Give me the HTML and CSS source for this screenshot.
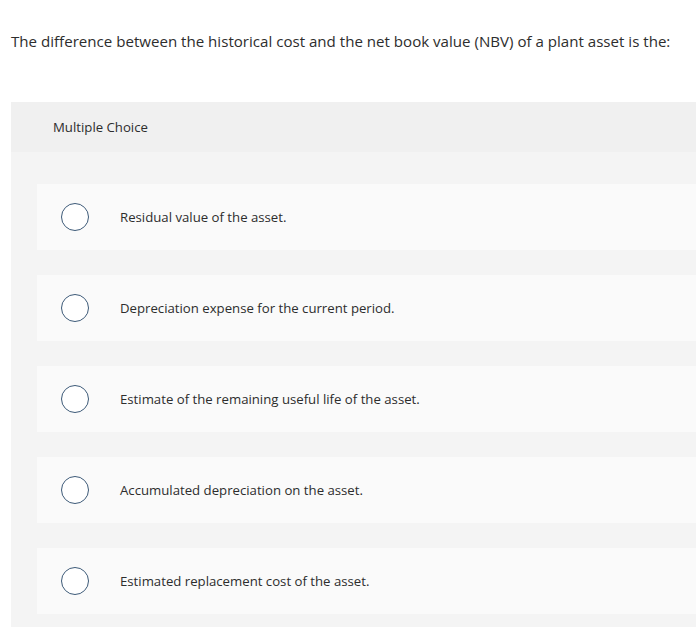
FILE: index.html
```html
<!DOCTYPE html>
<html lang="en">
<head>
<meta charset="utf-8">
<title>Multiple Choice</title>
<link rel="stylesheet" href="styles.css">
</head>
<body>
<p class="question">The difference between the historical cost and the net book value (NBV) of a plant asset is the:</p>
<section class="panel">
  <div class="panel-header">Multiple Choice</div>
  <div class="options">
    <label class="option"><span class="radio"></span><span class="option-text">Residual value of the asset.</span></label>
    <label class="option"><span class="radio"></span><span class="option-text">Depreciation expense for the current period.</span></label>
    <label class="option"><span class="radio"></span><span class="option-text">Estimate of the remaining useful life of the asset.</span></label>
    <label class="option"><span class="radio"></span><span class="option-text">Accumulated depreciation on the asset.</span></label>
    <label class="option"><span class="radio"></span><span class="option-text">Estimated replacement cost of the asset.</span></label>
  </div>
</section>
</body>
</html>
```

FILE: styles.css
```css
html, body {
  margin: 0;
  padding: 0;
  background: #ffffff;
}
body {
  font-family: "Open Sans", "Lato", sans-serif;
  color: #333333;
  overflow: hidden;
}
.question {
  margin: 0;
  padding: 30px 0 0 11px;
  font-size: 15.1px;
  line-height: 22px;
  color: #2d2d2d;
  white-space: nowrap;
}
.panel {
  margin: 50px 0 0 11px;
  background: #f4f4f4;
  padding-bottom: 13px;
}
.panel-header {
  height: 50px;
  line-height: 50px;
  background: #f0f0f0;
  padding-left: 42px;
  font-size: 13.2px;
  color: #2d2d2d;
}
.options {
  display: flex;
  flex-direction: column;
  gap: 25px;
  padding: 32px 0 0 26px;
}
.option {
  display: flex;
  align-items: center;
  height: 66px;
  background: #fafafa;
  padding-left: 24px;
}
.radio {
  box-sizing: border-box;
  width: 28px;
  height: 28px;
  border: 1.5px solid #3d5a78;
  border-radius: 50%;
  background: #ffffff;
  flex-shrink: 0;
}
.option-text {
  margin-left: 31px;
  font-size: 13.2px;
  color: #2d2d2d;
}
```
